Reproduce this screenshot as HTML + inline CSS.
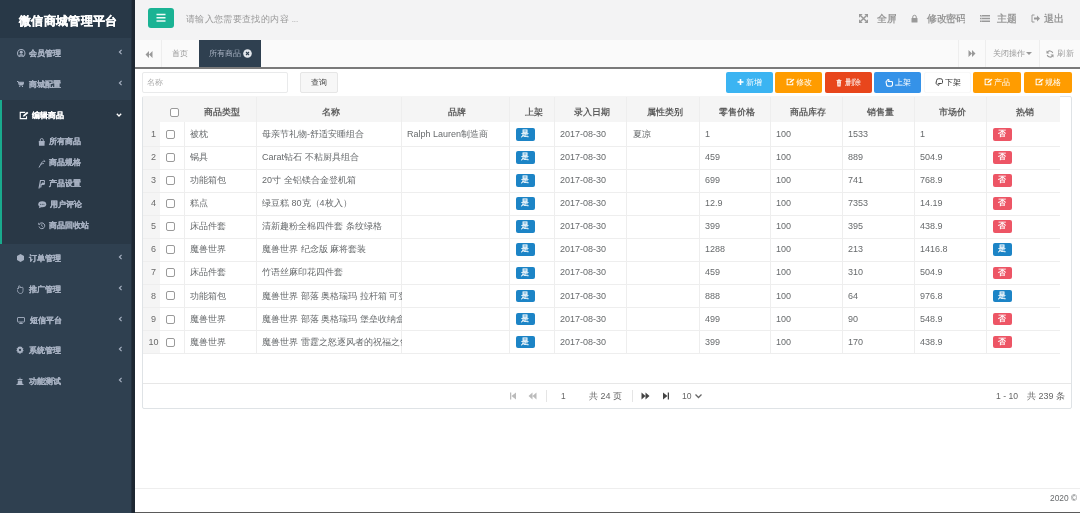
<!DOCTYPE html>
<html><head><meta charset="utf-8">
<style>
*{box-sizing:border-box;margin:0;padding:0}
html,body{width:1080px;height:513px;overflow:hidden;background:#fff;font-family:"Liberation Sans",sans-serif;position:relative}
body{will-change:transform}
.a{position:absolute}
svg{display:block}
#side{left:0;top:0;width:135px;height:513px;background:#2f4050}
#sideshadow{left:131px;top:0;width:4px;height:513px;background:linear-gradient(to right,#28384a 0,#1e2833 25%,#1c2631 100%)}
#logo{left:0;top:0;width:135px;height:38px;background:#283847;}
#logotx{left:19px;top:0;color:#fff;font-weight:bold;font-size:13px;transform:scale(0.95);transform-origin:0 50%;line-height:41px;white-space:nowrap;-webkit-text-stroke:0.3px #fff}
#active{left:0;top:100px;width:135px;height:144px;background:#293846;border-left:2px solid #19aa8d}
.mi{position:absolute;left:0;width:135px;height:20px;color:#a7b1c2;font-size:8px;white-space:nowrap}
.mi .ic{position:absolute;left:17px;top:5px}
.mi .tx{position:absolute;left:29px;top:4px;font-weight:bold;line-height:12px;-webkit-text-stroke:0.12px currentColor}
.mi .ar{position:absolute;left:118px;top:5px}
.sm{position:absolute;left:38px;height:14px;color:#a7b1c2;font-size:8px;white-space:nowrap}
.sm .ic{position:absolute;left:0;top:3px}
.sm .tx{position:absolute;left:11px;top:1px;line-height:12px;font-weight:bold;-webkit-text-stroke:0.12px currentColor}
#nav{left:135px;top:0;width:945px;height:40px;background:#f3f3f4}
#tabs{left:135px;top:40px;width:945px;height:29px;background:#fafafa;border-bottom:2px solid #7a7a7a}
#foot{left:135px;top:488px;width:945px;height:25px;background:#fff;border-top:1px solid #eee;border-bottom:1px solid #5a5a5a}
.btn{position:absolute;top:72px;height:21px;width:47px;border-radius:2px;color:#fff;font-size:8px;line-height:21px;white-space:nowrap}
.btn svg{position:absolute;top:6px}
.btn span{position:absolute;top:0}
.vl{width:1px;background:#eeeeee}
.hl{left:143px;width:917px;height:1px;background:#eeeeee}
.th{top:105px;height:14px;line-height:14px;text-align:center;font-weight:bold;color:#5e5e5e;font-size:8.6px;padding-left:4px;white-space:nowrap}
.td{height:12px;line-height:12px;font-size:9px;color:#676a6c;white-space:nowrap;overflow:hidden}
.num{left:143px;width:21px;text-align:center;color:#6a6a6a}
.cbx{width:9px;height:9px;border:1px solid #9a9a9a;border-radius:2px;background:#fff}
.lb{width:18.5px;height:12.5px;line-height:12.5px;text-align:center;color:#fff;font-size:8px;font-weight:bold;border-radius:2px}
.ls{background:#1c84c6}.ld{background:#ed5565}
#panel{left:142px;top:96px;width:930px;height:313px;border:1px solid #dfe3e6;border-radius:2px}
</style></head><body>
<div id="side" class="a"></div>
<div id="logo" class="a"></div><div id="logotx" class="a">微信商城管理平台</div>
<div id="active" class="a"></div>
<div id="sideshadow" class="a"></div>

<!-- menu -->
<div class="mi" style="top:44px">
 <svg class="ic" width="8.5" height="8.5" viewBox="0 0 16 16" style="top:4.5px"><circle cx="8" cy="8" r="7" fill="none" stroke="#a7b1c2" stroke-width="2"/><circle cx="8" cy="6.2" r="2.8" fill="#a7b1c2"/><path d="M3.2 12.8c1-2.2 2.8-3 4.8-3s3.8.8 4.8 3" fill="#a7b1c2"/></svg>
 <span class="tx">会员管理</span>
 <svg class="ar" width="5" height="6" viewBox="0 0 5 6" style="left:118px;top:5px"><path d="M3.6 0.9L1.4 3l2.2 2.1" fill="none" stroke="#a7b1c2" stroke-width="1.15"/></svg>
</div>
<div class="mi" style="top:75px">
 <svg class="ic" width="7" height="6" viewBox="0 0 14 12" style="left:17px;top:5.5px"><path d="M0 1h2.5l2 7h7l2-5.5H3.5" fill="none" stroke="#a7b1c2" stroke-width="2"/><path d="M4 3h9.5l-1.8 5H5z" fill="#a7b1c2"/><circle cx="5.5" cy="10.8" r="1.2" fill="#a7b1c2"/><circle cx="11" cy="10.8" r="1.2" fill="#a7b1c2"/></svg>
 <span class="tx">商城配置</span>
 <svg class="ar" width="5" height="6" viewBox="0 0 5 6" style="left:118px;top:5px"><path d="M3.6 0.9L1.4 3l2.2 2.1" fill="none" stroke="#a7b1c2" stroke-width="1.15"/></svg>
</div>
<div class="mi" style="top:106px;color:#fff">
 <svg class="ic" width="10" height="9" viewBox="0 0 16 14" style="left:19px"><path d="M10 2H2v10h10V8" fill="none" stroke="#fff" stroke-width="1.8"/><path d="M6 9l1-3 6-5 2 2-6 5z" fill="#fff"/></svg>
 <span class="tx" style="left:32px">编辑商品</span>
 <svg class="ar" width="6" height="4" viewBox="0 0 6 4" style="left:116px;top:6.5px"><path d="M0.8 0.8L3 3l2.2-2.2" fill="none" stroke="#fff" stroke-width="1.3"/></svg>
</div>

<div class="sm" style="top:135px"><svg class="ic" width="7.5" height="8" viewBox="0 0 15 16" style="top:2.5px"><path d="M1.5 6h12l-.5 9.5H2z" fill="#a7b1c2"/><path d="M4.5 6V4a3 3 0 0 1 6 0v2" fill="none" stroke="#a7b1c2" stroke-width="1.8"/><path d="M4.5 8.5h.1M10.5 8.5h.1" stroke="#2f4050" stroke-width="1.4"/></svg><span class="tx">所有商品</span></div>
<div class="sm" style="top:156px"><svg class="ic" width="8" height="9" viewBox="0 0 16 18" style="top:2.5px"><path d="M2 17l5-9c1-2 2-3 4-3" fill="none" stroke="#a7b1c2" stroke-width="2"/><path d="M6 11c2-2 4-2 6-2" fill="none" stroke="#a7b1c2" stroke-width="1.8"/><path d="M11 1l4 4-3 1z" fill="#a7b1c2"/></svg><span class="tx">商品规格</span></div>
<div class="sm" style="top:177px"><svg class="ic" width="7" height="9" viewBox="0 0 14 18" style="top:2.5px"><path d="M2 17L5 1h5a3.8 3.8 0 0 1 0 7.6H6.5L5.3 15" fill="none" stroke="#a7b1c2" stroke-width="2.4"/><path d="M8 5h2.5a2 2 0 0 1 0 4H7z" fill="#a7b1c2"/></svg><span class="tx" style="left:10.5px">产品设置</span></div>
<div class="sm" style="top:198px"><svg class="ic" width="8.5" height="7.5" viewBox="0 0 17 15" style="top:3px"><ellipse cx="8.5" cy="6.5" rx="8" ry="6" fill="#a7b1c2"/><path d="M1.5 14.5L3.5 10l4 2z" fill="#a7b1c2"/><circle cx="5.2" cy="6.5" r="1.1" fill="#2f4050"/><circle cx="8.5" cy="6.5" r="1.1" fill="#2f4050"/><circle cx="11.8" cy="6.5" r="1.1" fill="#2f4050"/></svg><span class="tx" style="left:12px">用户评论</span></div>
<div class="sm" style="top:219px"><svg class="ic" width="7.5" height="7.5" viewBox="0 0 15 15" style="top:3px"><path d="M3.2 3.8A5.8 5.8 0 1 1 2 9" fill="none" stroke="#a7b1c2" stroke-width="2"/><path d="M0.5 1v4.5H5z" fill="#a7b1c2"/><path d="M7.5 4.5v3.5l2 1.5" fill="none" stroke="#a7b1c2" stroke-width="1.7"/></svg><span class="tx" style="left:10.5px">商品回收站</span></div>

<div class="mi" style="top:249px">
 <svg class="ic" width="7" height="8" viewBox="0 0 14 16" style="left:17px"><path d="M7 0l7 4v8l-7 4-7-4V4z" fill="#a7b1c2"/></svg>
 <span class="tx">订单管理</span>
 <svg class="ar" width="5" height="6" viewBox="0 0 5 6" style="left:118px;top:5px"><path d="M3.6 0.9L1.4 3l2.2 2.1" fill="none" stroke="#a7b1c2" stroke-width="1.15"/></svg>
</div>
<div class="mi" style="top:280px">
 <svg class="ic" width="7" height="9" viewBox="0 0 14 18" style="left:17px"><path d="M3 7V3a1.5 1.5 0 0 1 3 0v3a1.5 1.5 0 0 1 3 0 1.5 1.5 0 0 1 3 0v5c0 4-2 6-5 6s-5-2-6-5l-1-3a1.5 1.5 0 0 1 3-1z" fill="none" stroke="#a7b1c2" stroke-width="1.6"/></svg>
 <span class="tx">推广管理</span>
 <svg class="ar" width="5" height="6" viewBox="0 0 5 6" style="left:118px;top:5px"><path d="M3.6 0.9L1.4 3l2.2 2.1" fill="none" stroke="#a7b1c2" stroke-width="1.15"/></svg>
</div>
<div class="mi" style="top:311px">
 <svg class="ic" width="8" height="7" viewBox="0 0 16 14" style="left:17px;top:6px"><rect x="1" y="1" width="14" height="9" rx="1" fill="none" stroke="#a7b1c2" stroke-width="1.8"/><path d="M4.5 13h7M8 10v3" stroke="#a7b1c2" stroke-width="1.8"/></svg>
 <span class="tx" style="left:30px">短信平台</span>
 <svg class="ar" width="5" height="6" viewBox="0 0 5 6" style="left:118px;top:5px"><path d="M3.6 0.9L1.4 3l2.2 2.1" fill="none" stroke="#a7b1c2" stroke-width="1.15"/></svg>
</div>
<div class="mi" style="top:341px">
 <svg class="ic" width="8" height="8" viewBox="0 0 16 16" style="left:16px"><path d="M8 0l1.5 2.2 2.6-.8.3 2.7 2.6 1L13.7 7.5 15.5 9.6l-2.4 1.3.1 2.7-2.7-.3L9.3 15.8 8 13.5 6.7 15.8l-1.2-2.5-2.7.3.1-2.7L.5 9.6 2.3 7.5 1 5.1l2.6-1 .3-2.7 2.6.8z" fill="#a7b1c2"/><circle cx="8" cy="8" r="2.3" fill="#2f4050"/></svg>
 <span class="tx">系统管理</span>
 <svg class="ar" width="5" height="6" viewBox="0 0 5 6" style="left:118px;top:5px"><path d="M3.6 0.9L1.4 3l2.2 2.1" fill="none" stroke="#a7b1c2" stroke-width="1.15"/></svg>
</div>
<div class="mi" style="top:372px">
 <svg class="ic" width="8" height="8" viewBox="0 0 16 16" style="left:16px"><path d="M8 1l2 2H6zM3 4h10v2H3zM4 7h8l1 7H3zM1 14h14v2H1z" fill="#a7b1c2"/></svg>
 <span class="tx">功能测试</span>
 <svg class="ar" width="5" height="6" viewBox="0 0 5 6" style="left:118px;top:5px"><path d="M3.6 0.9L1.4 3l2.2 2.1" fill="none" stroke="#a7b1c2" stroke-width="1.15"/></svg>
</div>

<!-- navbar -->
<div id="nav" class="a"></div>
<div class="a" style="left:148px;top:8px;width:26px;height:20px;background:#1ab394;border-radius:3px">
 <svg width="26" height="20" viewBox="0 0 26 20"><path d="M8.5 6.5h9M8.5 9.8h9M8.5 13.1h9" stroke="#effcf8" stroke-width="1.5"/></svg>
</div>
<div class="a" style="left:186px;top:12px;font-size:10px;transform:scale(0.935);transform-origin:0 50%;color:#999;line-height:13px;white-space:nowrap">请输入您需要查找的内容<span style="margin-left:3px;font-size:8.5px">...</span></div>

<div class="a" style="left:859px;top:14px"><svg width="9" height="9" viewBox="0 0 16 16"><path d="M3 3l10 10M13 3L3 13" stroke="#999" stroke-width="2.6"/><path d="M0 0h6.5L0 6.5zM16 0h-6.5L16 6.5zM0 16h6.5L0 9.5zM16 16h-6.5L16 9.5z" fill="#999"/></svg></div>
<div class="a" style="left:877px;top:12px;font-size:10px;transform:scale(0.95);transform-origin:0 50%;color:#999;font-weight:bold;line-height:13px">全屏</div>
<div class="a" style="left:911px;top:14px"><svg width="7" height="9" viewBox="0 0 14 16"><path d="M3.5 7V5a3.5 3.5 0 0 1 7 0v2" fill="none" stroke="#999" stroke-width="2"/><rect x="1" y="7" width="12" height="9" rx="1" fill="#999"/></svg></div>
<div class="a" style="left:927px;top:12px;font-size:10px;transform:scale(0.95);transform-origin:0 50%;color:#999;font-weight:bold;line-height:13px">修改密码</div>
<div class="a" style="left:980px;top:14px"><svg width="10" height="9" viewBox="0 0 20 16"><path d="M0 1h20v3H0zM0 6.5h20v3H0zM0 12h20v3H0z" fill="#999"/><path d="M2 2h2M2 7.5h2M2 13h2" stroke="#f3f3f4" stroke-width="1"/></svg></div>
<div class="a" style="left:997px;top:12px;font-size:10px;transform:scale(0.95);transform-origin:0 50%;color:#999;font-weight:bold;line-height:13px">主题</div>
<div class="a" style="left:1031px;top:14px"><svg width="9" height="9" viewBox="0 0 18 16"><path d="M7 1H2v14h5" fill="none" stroke="#999" stroke-width="2"/><path d="M6 6h6V2l6 6-6 6v-4H6z" fill="#999"/></svg></div>
<div class="a" style="left:1044px;top:12px;font-size:10px;transform:scale(0.95);transform-origin:0 50%;color:#999;font-weight:bold;line-height:13px">退出</div>

<!-- tabs -->
<div id="tabs" class="a"></div>
<div class="a" style="left:161px;top:40px;width:1px;height:27px;background:#eee"></div>
<div class="a" style="left:145px;top:51px"><svg width="8" height="7" viewBox="0 0 16 14"><path d="M8 0v14L1 7zM15 0v14L8 7z" fill="#999"/></svg></div>
<div class="a" style="left:172px;top:48px;font-size:8px;color:#999;line-height:12px">首页</div>
<div class="a" style="left:199px;top:40px;width:62px;height:27px;background:#2f4050"></div>
<div class="a" style="left:209px;top:48px;font-size:8px;color:#a7b1c2;line-height:12px">所有商品</div>
<div class="a" style="left:243px;top:49px"><svg width="9" height="9" viewBox="0 0 9 9"><circle cx="4.5" cy="4.5" r="4.3" fill="#e3e7ec"/><path d="M3 3l3 3M6 3L3 6" stroke="#2f4050" stroke-width="1.1"/></svg></div>
<div class="a" style="left:958px;top:40px;width:1px;height:27px;background:#eee"></div>
<div class="a" style="left:985px;top:40px;width:1px;height:27px;background:#eee"></div>
<div class="a" style="left:1039px;top:40px;width:1px;height:27px;background:#eee"></div>
<div class="a" style="left:968px;top:50px"><svg width="8" height="7" viewBox="0 0 16 14"><path d="M1 0v14l7-7zM8 0v14l7-7z" fill="#999"/></svg></div>
<div class="a" style="left:993px;top:48px;font-size:8px;color:#999;line-height:12px;white-space:nowrap">关闭操作<svg style="display:inline-block;vertical-align:middle;margin-left:1px" width="6" height="4" viewBox="0 0 6 4"><path d="M0 0h6L3 3z" fill="#999"/></svg></div>
<div class="a" style="left:1046px;top:49.5px"><svg width="8" height="8" viewBox="0 0 16 16"><path d="M13.5 6A6 6 0 0 0 2.5 5M2.5 10a6 6 0 0 0 11 1" fill="none" stroke="#999" stroke-width="2.2"/><path d="M1 1v6h6zM15 15V9H9z" fill="#999"/></svg></div>
<div class="a" style="left:1057px;top:48px;font-size:8px;letter-spacing:1px;color:#999;line-height:12px">刷新</div>

<!-- search -->
<div class="a" style="left:142px;top:72px;width:146px;height:21px;border:1px solid #e9eaeb;border-radius:2px;background:#fff"></div>
<div class="a" style="left:147px;top:77px;font-size:8px;color:#aaa;line-height:11px">名称</div>
<div class="a" style="left:300px;top:72px;width:38px;height:21px;border:1px solid #e6e6e6;border-radius:2px;background:#f7f7f7;font-size:8.3px;color:#3a3a3a;line-height:19px;text-align:center">查询</div>

<!-- toolbar -->
<div class="btn" style="left:726px;background:#3bb4f2"><svg style="left:11px" width="7" height="8" viewBox="0 0 14 14"><path d="M7 1v12M1 7h12" stroke="#fff" stroke-width="3.2"/></svg><span style="left:19.5px">新增</span></div>
<div class="btn" style="left:775px;background:#ff9c00"><svg style="left:11px" width="9" height="8" viewBox="0 0 16 14"><path d="M10 2H2v10h10V8" fill="none" stroke="#fff" stroke-width="1.8"/><path d="M6 9l1-3 6-5 2 2-6 5z" fill="#fff"/></svg><span style="left:21px">修改</span></div>
<div class="btn" style="left:825px;background:#e8461c"><svg style="left:11px;top:6.5px" width="6" height="8" viewBox="0 0 12 16"><path d="M1 3h10M4.5 3V1.5h3V3" fill="none" stroke="#fff" stroke-width="1.6"/><path d="M2 4.5h8l-.8 10.5H2.8z" fill="#fff"/><path d="M4.5 7v6M7.5 7v6" stroke="#e8461c" stroke-width="1"/></svg><span style="left:20px">删除</span></div>
<div class="btn" style="left:874px;background:#3592e8"><svg style="left:11px;top:6px" width="8" height="9" viewBox="0 0 16 18"><path d="M2 7.5L5.5 3.5a1.5 1.5 0 0 1 2.2 2L6.5 7H13a2 2 0 0 1 2 2v4a3.5 3.5 0 0 1-3.5 3.5H7A4 4 0 0 1 3 12.5z" fill="none" stroke="#fff" stroke-width="2.2" stroke-linejoin="round"/></svg><span style="left:20.5px">上架</span></div>
<div class="btn" style="left:924px;background:#fff;color:#333;border:1px solid #f8f8f8"><svg style="left:10px;top:5px" width="8" height="9" viewBox="0 0 16 18"><path d="M2 7.5L5.5 3.5a1.5 1.5 0 0 1 2.2 2L6.5 7H13a2 2 0 0 1 2 2v4a3.5 3.5 0 0 1-3.5 3.5H7A4 4 0 0 1 3 12.5z" fill="none" stroke="#444" stroke-width="2" stroke-linejoin="round" transform="translate(16 0) scale(-1 1) rotate(180 8 9) scale(1 1)"/></svg><span style="left:19.5px;top:-1px">下架</span></div>
<div class="btn" style="width:48px;left:973px;background:#ff9c00"><svg style="left:11px" width="9" height="8" viewBox="0 0 16 14"><path d="M10 2H2v10h10V8" fill="none" stroke="#fff" stroke-width="1.8"/><path d="M6 9l1-3 6-5 2 2-6 5z" fill="#fff"/></svg><span style="left:21px">产品</span></div>
<div class="btn" style="width:48px;left:1024px;background:#ff9c00"><svg style="left:11px" width="9" height="8" viewBox="0 0 16 14"><path d="M10 2H2v10h10V8" fill="none" stroke="#fff" stroke-width="1.8"/><path d="M6 9l1-3 6-5 2 2-6 5z" fill="#fff"/></svg><span style="left:21px">规格</span></div>

<!-- table -->
<div id="panel" class="a"></div>
<div class="a" style="left:143px;top:96px;width:917px;height:25.5px;background:#f5f5f5"></div>
<div class="a" style="left:143px;top:122px;width:17px;height:231px;background:#f5f5f5"></div>
<div class="a vl" style="left:256.0px;top:97px;height:25px"></div>
<div class="a vl" style="left:401.0px;top:97px;height:25px"></div>
<div class="a vl" style="left:509.0px;top:97px;height:25px"></div>
<div class="a vl" style="left:554.0px;top:97px;height:25px"></div>
<div class="a vl" style="left:626.0px;top:97px;height:25px"></div>
<div class="a vl" style="left:699.0px;top:97px;height:25px"></div>
<div class="a vl" style="left:770.0px;top:97px;height:25px"></div>
<div class="a vl" style="left:842.0px;top:97px;height:25px"></div>
<div class="a vl" style="left:914.0px;top:97px;height:25px"></div>
<div class="a vl" style="left:986.0px;top:97px;height:25px"></div>
<div class="a th" style="left:184.0px;width:72.0px">商品类型</div>
<div class="a th" style="left:256.0px;width:145.0px">名称</div>
<div class="a th" style="left:401.0px;width:108.0px">品牌</div>
<div class="a th" style="left:509.0px;width:45.0px">上架</div>
<div class="a th" style="left:554.0px;width:72.0px">录入日期</div>
<div class="a th" style="left:626.0px;width:73.0px">属性类别</div>
<div class="a th" style="left:699.0px;width:71.0px">零售价格</div>
<div class="a th" style="left:770.0px;width:72.0px">商品库存</div>
<div class="a th" style="left:842.0px;width:72.0px">销售量</div>
<div class="a th" style="left:914.0px;width:72.0px">市场价</div>
<div class="a th" style="left:986.0px;width:74.0px">热销</div>
<div class="a cbx" style="left:170px;top:108px"></div>
<div class="a vl" style="left:184.0px;top:122px;height:231px"></div>
<div class="a vl" style="left:256.0px;top:122px;height:231px"></div>
<div class="a vl" style="left:401.0px;top:122px;height:231px"></div>
<div class="a vl" style="left:509.0px;top:122px;height:231px"></div>
<div class="a vl" style="left:554.0px;top:122px;height:231px"></div>
<div class="a vl" style="left:626.0px;top:122px;height:231px"></div>
<div class="a vl" style="left:699.0px;top:122px;height:231px"></div>
<div class="a vl" style="left:770.0px;top:122px;height:231px"></div>
<div class="a vl" style="left:842.0px;top:122px;height:231px"></div>
<div class="a vl" style="left:914.0px;top:122px;height:231px"></div>
<div class="a vl" style="left:986.0px;top:122px;height:231px"></div>
<div class="a td num" style="top:128.03px">1</div>
<div class="a cbx" style="left:166px;top:130.00px"></div>
<div class="a td" style="left:190.0px;top:128.03px;width:66.5px">被枕</div>
<div class="a td" style="left:262.0px;top:128.03px;width:139.5px">母亲节礼物-舒适安睡组合</div>
<div class="a td" style="left:407.0px;top:128.03px;width:102.5px">Ralph Lauren制造商</div>
<div class="a td" style="left:560.0px;top:128.03px;width:66.5px">2017-08-30</div>
<div class="a td" style="left:633.0px;top:128.03px;width:66.5px">夏凉</div>
<div class="a td" style="left:705.0px;top:128.03px;width:65.5px">1</div>
<div class="a td" style="left:776.0px;top:128.03px;width:66.5px">100</div>
<div class="a td" style="left:848.0px;top:128.03px;width:66.5px">1533</div>
<div class="a td" style="left:920.0px;top:128.03px;width:66.5px">1</div>
<div class="a lb ls" style="left:516px;top:128.10px">是</div>
<div class="a lb ld" style="left:993px;top:128.10px">否</div>
<div class="a hl" style="top:145.57px"></div>
<div class="a td num" style="top:151.10px">2</div>
<div class="a cbx" style="left:166px;top:153.07px"></div>
<div class="a td" style="left:190.0px;top:151.10px;width:66.5px">锅具</div>
<div class="a td" style="left:262.0px;top:151.10px;width:139.5px">Carat钻石 不粘厨具组合</div>
<div class="a td" style="left:560.0px;top:151.10px;width:66.5px">2017-08-30</div>
<div class="a td" style="left:705.0px;top:151.10px;width:65.5px">459</div>
<div class="a td" style="left:776.0px;top:151.10px;width:66.5px">100</div>
<div class="a td" style="left:848.0px;top:151.10px;width:66.5px">889</div>
<div class="a td" style="left:920.0px;top:151.10px;width:66.5px">504.9</div>
<div class="a lb ls" style="left:516px;top:151.17px">是</div>
<div class="a lb ld" style="left:993px;top:151.17px">否</div>
<div class="a hl" style="top:168.64px"></div>
<div class="a td num" style="top:174.17px">3</div>
<div class="a cbx" style="left:166px;top:176.14px"></div>
<div class="a td" style="left:190.0px;top:174.17px;width:66.5px">功能箱包</div>
<div class="a td" style="left:262.0px;top:174.17px;width:139.5px">20寸 全铝镁合金登机箱</div>
<div class="a td" style="left:560.0px;top:174.17px;width:66.5px">2017-08-30</div>
<div class="a td" style="left:705.0px;top:174.17px;width:65.5px">699</div>
<div class="a td" style="left:776.0px;top:174.17px;width:66.5px">100</div>
<div class="a td" style="left:848.0px;top:174.17px;width:66.5px">741</div>
<div class="a td" style="left:920.0px;top:174.17px;width:66.5px">768.9</div>
<div class="a lb ls" style="left:516px;top:174.24px">是</div>
<div class="a lb ld" style="left:993px;top:174.24px">否</div>
<div class="a hl" style="top:191.71px"></div>
<div class="a td num" style="top:197.25px">4</div>
<div class="a cbx" style="left:166px;top:199.21px"></div>
<div class="a td" style="left:190.0px;top:197.25px;width:66.5px">糕点</div>
<div class="a td" style="left:262.0px;top:197.25px;width:139.5px">绿豆糕 80克（4枚入）</div>
<div class="a td" style="left:560.0px;top:197.25px;width:66.5px">2017-08-30</div>
<div class="a td" style="left:705.0px;top:197.25px;width:65.5px">12.9</div>
<div class="a td" style="left:776.0px;top:197.25px;width:66.5px">100</div>
<div class="a td" style="left:848.0px;top:197.25px;width:66.5px">7353</div>
<div class="a td" style="left:920.0px;top:197.25px;width:66.5px">14.19</div>
<div class="a lb ls" style="left:516px;top:197.31px">是</div>
<div class="a lb ld" style="left:993px;top:197.31px">否</div>
<div class="a hl" style="top:214.78px"></div>
<div class="a td num" style="top:220.31px">5</div>
<div class="a cbx" style="left:166px;top:222.28px"></div>
<div class="a td" style="left:190.0px;top:220.31px;width:66.5px">床品件套</div>
<div class="a td" style="left:262.0px;top:220.31px;width:139.5px">清新趣粉全棉四件套 条纹绿格</div>
<div class="a td" style="left:560.0px;top:220.31px;width:66.5px">2017-08-30</div>
<div class="a td" style="left:705.0px;top:220.31px;width:65.5px">399</div>
<div class="a td" style="left:776.0px;top:220.31px;width:66.5px">100</div>
<div class="a td" style="left:848.0px;top:220.31px;width:66.5px">395</div>
<div class="a td" style="left:920.0px;top:220.31px;width:66.5px">438.9</div>
<div class="a lb ls" style="left:516px;top:220.38px">是</div>
<div class="a lb ld" style="left:993px;top:220.38px">否</div>
<div class="a hl" style="top:237.85px"></div>
<div class="a td num" style="top:243.38px">6</div>
<div class="a cbx" style="left:166px;top:245.35px"></div>
<div class="a td" style="left:190.0px;top:243.38px;width:66.5px">魔兽世界</div>
<div class="a td" style="left:262.0px;top:243.38px;width:139.5px">魔兽世界 纪念版 麻将套装</div>
<div class="a td" style="left:560.0px;top:243.38px;width:66.5px">2017-08-30</div>
<div class="a td" style="left:705.0px;top:243.38px;width:65.5px">1288</div>
<div class="a td" style="left:776.0px;top:243.38px;width:66.5px">100</div>
<div class="a td" style="left:848.0px;top:243.38px;width:66.5px">213</div>
<div class="a td" style="left:920.0px;top:243.38px;width:66.5px">1416.8</div>
<div class="a lb ls" style="left:516px;top:243.45px">是</div>
<div class="a lb ls" style="left:993px;top:243.45px">是</div>
<div class="a hl" style="top:260.92px"></div>
<div class="a td num" style="top:266.46px">7</div>
<div class="a cbx" style="left:166px;top:268.42px"></div>
<div class="a td" style="left:190.0px;top:266.46px;width:66.5px">床品件套</div>
<div class="a td" style="left:262.0px;top:266.46px;width:139.5px">竹语丝麻印花四件套</div>
<div class="a td" style="left:560.0px;top:266.46px;width:66.5px">2017-08-30</div>
<div class="a td" style="left:705.0px;top:266.46px;width:65.5px">459</div>
<div class="a td" style="left:776.0px;top:266.46px;width:66.5px">100</div>
<div class="a td" style="left:848.0px;top:266.46px;width:66.5px">310</div>
<div class="a td" style="left:920.0px;top:266.46px;width:66.5px">504.9</div>
<div class="a lb ls" style="left:516px;top:266.52px">是</div>
<div class="a lb ld" style="left:993px;top:266.52px">否</div>
<div class="a hl" style="top:283.99px"></div>
<div class="a td num" style="top:289.53px">8</div>
<div class="a cbx" style="left:166px;top:291.49px"></div>
<div class="a td" style="left:190.0px;top:289.53px;width:66.5px">功能箱包</div>
<div class="a td" style="left:262.0px;top:289.53px;width:139.5px">魔兽世界 部落 奥格瑞玛 拉杆箱 可登机</div>
<div class="a td" style="left:560.0px;top:289.53px;width:66.5px">2017-08-30</div>
<div class="a td" style="left:705.0px;top:289.53px;width:65.5px">888</div>
<div class="a td" style="left:776.0px;top:289.53px;width:66.5px">100</div>
<div class="a td" style="left:848.0px;top:289.53px;width:66.5px">64</div>
<div class="a td" style="left:920.0px;top:289.53px;width:66.5px">976.8</div>
<div class="a lb ls" style="left:516px;top:289.59px">是</div>
<div class="a lb ls" style="left:993px;top:289.59px">是</div>
<div class="a hl" style="top:307.06px"></div>
<div class="a td num" style="top:312.60px">9</div>
<div class="a cbx" style="left:166px;top:314.56px"></div>
<div class="a td" style="left:190.0px;top:312.60px;width:66.5px">魔兽世界</div>
<div class="a td" style="left:262.0px;top:312.60px;width:139.5px">魔兽世界 部落 奥格瑞玛 堡垒收纳盒</div>
<div class="a td" style="left:560.0px;top:312.60px;width:66.5px">2017-08-30</div>
<div class="a td" style="left:705.0px;top:312.60px;width:65.5px">499</div>
<div class="a td" style="left:776.0px;top:312.60px;width:66.5px">100</div>
<div class="a td" style="left:848.0px;top:312.60px;width:66.5px">90</div>
<div class="a td" style="left:920.0px;top:312.60px;width:66.5px">548.9</div>
<div class="a lb ls" style="left:516px;top:312.66px">是</div>
<div class="a lb ld" style="left:993px;top:312.66px">否</div>
<div class="a hl" style="top:330.13px"></div>
<div class="a td num" style="top:335.67px">10</div>
<div class="a cbx" style="left:166px;top:337.63px"></div>
<div class="a td" style="left:190.0px;top:335.67px;width:66.5px">魔兽世界</div>
<div class="a td" style="left:262.0px;top:335.67px;width:139.5px">魔兽世界 雷霆之怒逐风者的祝福之剑</div>
<div class="a td" style="left:560.0px;top:335.67px;width:66.5px">2017-08-30</div>
<div class="a td" style="left:705.0px;top:335.67px;width:65.5px">399</div>
<div class="a td" style="left:776.0px;top:335.67px;width:66.5px">100</div>
<div class="a td" style="left:848.0px;top:335.67px;width:66.5px">170</div>
<div class="a td" style="left:920.0px;top:335.67px;width:66.5px">438.9</div>
<div class="a lb ls" style="left:516px;top:335.73px">是</div>
<div class="a lb ld" style="left:993px;top:335.73px">否</div>
<div class="a hl" style="top:353px"></div>
<div class="a" style="left:143px;top:383px;width:928px;height:1px;background:#e7e7e7"></div>
<!-- pagination -->
<div class="a" style="left:509px;top:392px"><svg width="8" height="8" viewBox="0 0 16 16"><path d="M2 1h2.5v14H2zM14 1v14L5 8z" fill="#bbb"/></svg></div>
<div class="a" style="left:528px;top:392px"><svg width="9" height="8" viewBox="0 0 18 16"><path d="M9 1v14L1 8zM17 1v14L9 8z" fill="#bbb"/></svg></div>
<div class="a" style="left:546px;top:390px;width:1px;height:12px;background:#e5e5e5"></div>
<div class="a" style="left:561px;top:391px;font-size:8.4px;color:#666;line-height:11px">1</div>
<div class="a" style="left:589px;top:390px;font-size:9px;color:#666;line-height:12px;white-space:nowrap">共 24 页</div>
<div class="a" style="left:632px;top:390px;width:1px;height:12px;background:#e5e5e5"></div>
<div class="a" style="left:641px;top:392px"><svg width="9" height="8" viewBox="0 0 18 16"><path d="M1 1v14l8-7zM9 1v14l8-7z" fill="#444"/></svg></div>
<div class="a" style="left:662px;top:392px"><svg width="8" height="8" viewBox="0 0 16 16"><path d="M2 1v14l9-7zM11.5 1H14v14h-2.5z" fill="#444"/></svg></div>
<div class="a" style="left:682px;top:391px;font-size:8.6px;color:#666;line-height:11px;white-space:nowrap">10 <svg style="display:inline-block;vertical-align:middle;margin-left:1px" width="7" height="5" viewBox="0 0 14 10"><path d="M1 1l6 6 6-6" fill="none" stroke="#666" stroke-width="2.5"/></svg></div>
<div class="a" style="left:996px;top:389.5px;font-size:8.6px;color:#666;line-height:12px;white-space:nowrap">1 - 10</div><div class="a" style="left:1027px;top:389.5px;font-size:9px;color:#666;line-height:12px;white-space:nowrap">共 239 条</div>

<!-- footer -->
<div id="foot" class="a"></div>
<div class="a" style="left:1050px;top:493px;font-size:8.4px;color:#676a6c;line-height:11px;white-space:nowrap">2020 ©</div>
</body></html>
